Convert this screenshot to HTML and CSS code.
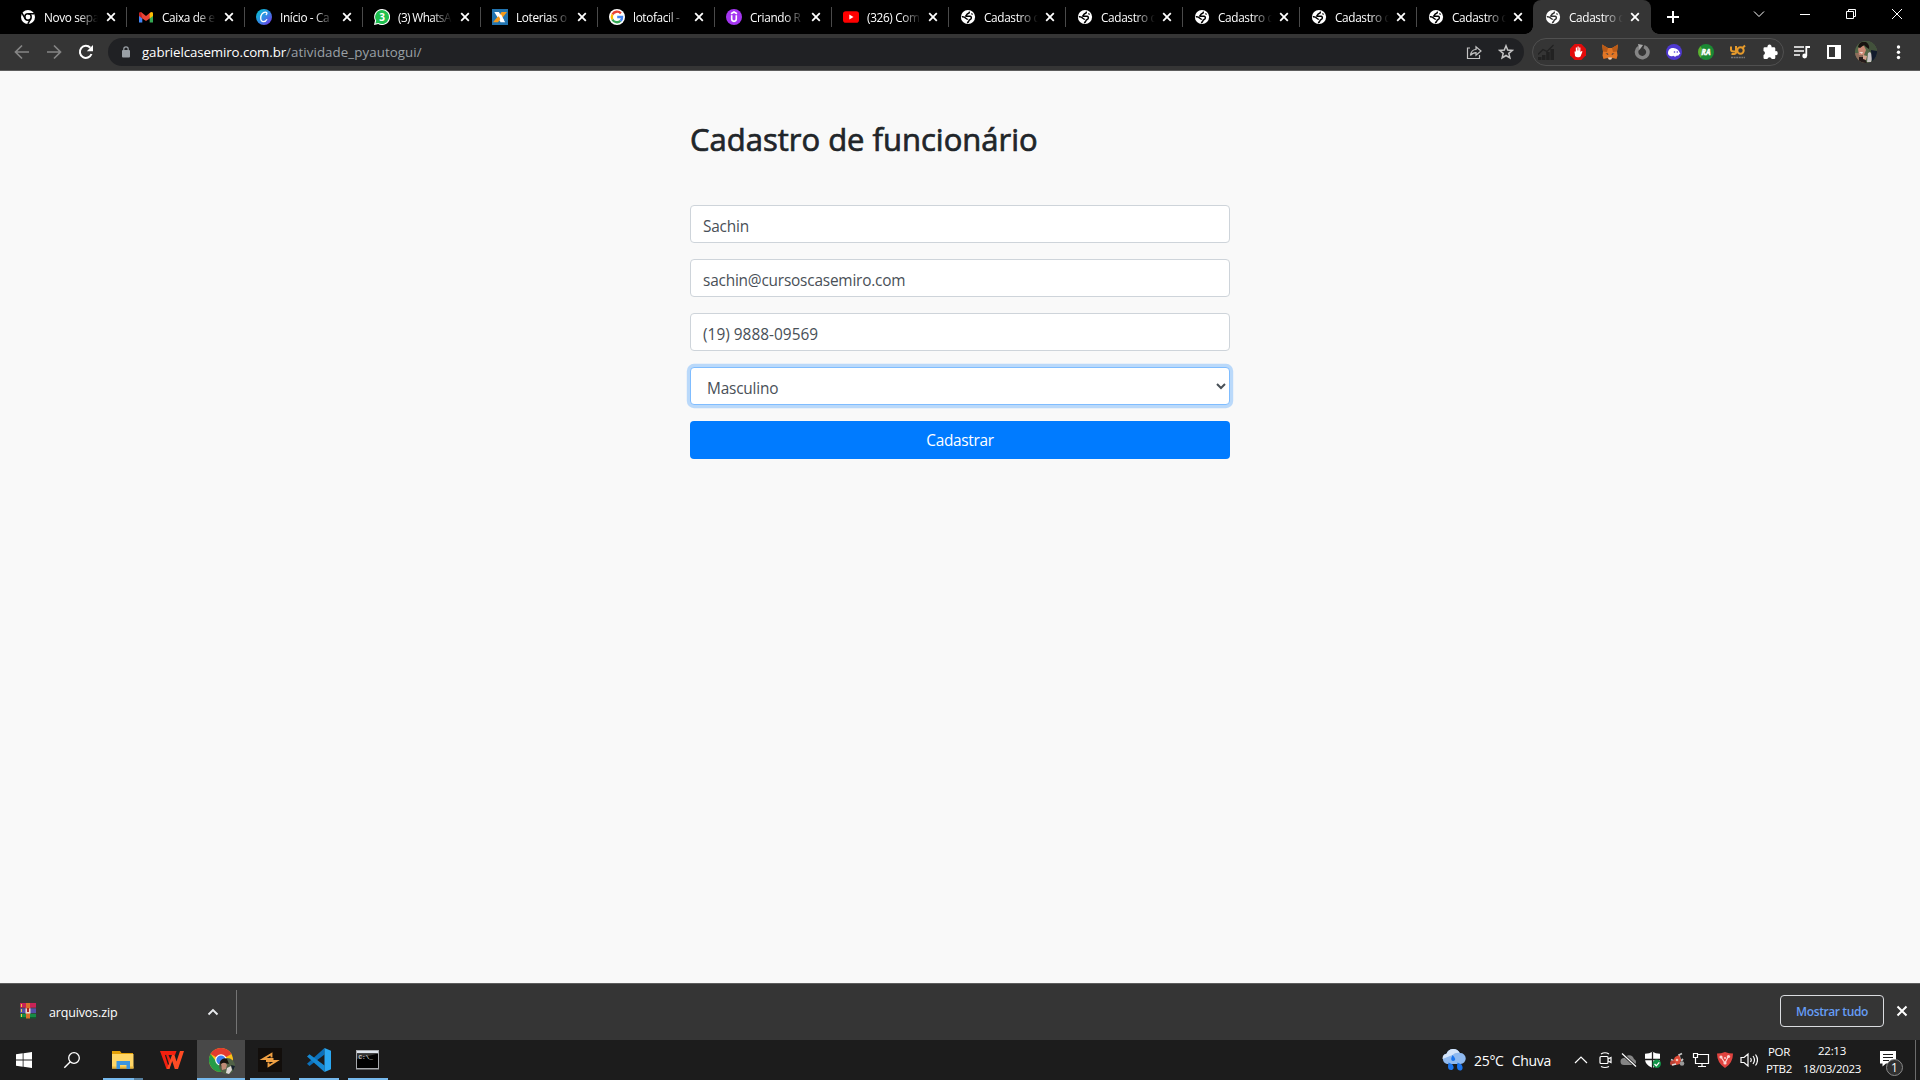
FILE: index.html
```
<!DOCTYPE html>
<html lang="pt-BR">
<head>
<meta charset="utf-8">
<title>Cadastro de funcionário</title>
<link rel="stylesheet" href="styles.css">
</head>
<body>
<svg class="defs" width="0" height="0">
  <symbol id="x" viewBox="0 0 16 16"><path d="M4.2 4.2l7.6 7.6M11.8 4.2l-7.6 7.6" stroke="currentColor" stroke-width="1.8" fill="none"/></symbol>
  <symbol id="globe" viewBox="0 0 16 16"><circle cx="8" cy="8" r="7.1" fill="#fff"/><path d="M9 2.600c.8 1.200-.2 1.900-1.400 2.200-1 .3-.6 1.600-2.200 2.400h4.800c1.300.2 1.500 1.700.6 2.800-.7.800-1.800.9-2 2-.2.900-.9 1.600-1.800 1.800" fill="none" stroke="currentColor" stroke-width="1.500"/><path d="M1.800 7.800c1.500-.2 3 .3 4 1.500.7.700 1.700.6 1.700 1.400" fill="none" stroke="currentColor" stroke-width="1.500"/><path d="M11.500 4.300l1 1.300" stroke="currentColor" stroke-width="1.200"/></symbol>
</svg>

<header class="tabs">
  <div class="tab wide"><svg class="fav" viewBox="0 0 16 16"><circle cx="8" cy="8" r="7" fill="#fff"/><circle cx="8" cy="8" r="3.2" fill="#fff" stroke="#000" stroke-width="1.5"/><path d="M8 4.8h6.4M5.2 9.6 2 4.2M10.8 9.6l-3 5.2" stroke="#000" stroke-width="1.5"/></svg><span class="title">Novo sepa</span><svg class="close"><use href="#x"/></svg></div>
  <div class="tab wide"><svg class="fav" viewBox="0 0 16 16"><path d="M1 4.5v9h3.3V7z" fill="#4285f4"/><path d="M15 4.5v9h-3.3V7z" fill="#34a853"/><path d="M1 4.2V7l3.3 2.4V4.2L2.7 3Q1 3 1 4.2z" fill="#c5221f"/><path d="M3 3.1 8 7l5-3.9-1.3 6.3L8 12 4.3 9.4z" fill="#ea4335"/><path d="M15 4.2V7l-3.3 2.4V4.2L13.3 3Q15 3 15 4.2z" fill="#fbbc04"/></svg><span class="title">Caixa de e</span><svg class="close"><use href="#x"/></svg></div>
  <div class="tab wide"><svg class="fav" viewBox="0 0 16 16"><defs><linearGradient id="cv" x2="1" y2="1"><stop stop-color="#00c4cc"/><stop offset=".5" stop-color="#2f8de4"/><stop offset="1" stop-color="#7d2ae8"/></linearGradient></defs><circle cx="8" cy="8" r="8" fill="url(#cv)"/><path d="M9.8 5.9c1.8-1.1 1.4-2.8-.3-2.8C6.6 3.1 4.700 6 4.700 9c0 2.3 1 3.7 2.7 3.7 1.600 0 2.800-1 3.600-2.500" fill="none" stroke="#fff" stroke-width="1.3"/></svg><span class="title">Início - Ca</span><svg class="close"><use href="#x"/></svg></div>
  <div class="tab wide"><svg class="fav" viewBox="0 0 16 16"><path d="M8 0a8 8 0 1 1-3.8 15L0 16l1-4.4A8 8 0 0 1 8 0z" fill="#fff"/><path d="M8 1a7 7 0 1 1-3.6 13L1.400 14.600l.8-2.900A7 7 0 0 1 8 1z" fill="#1fbf4f"/><text x="8" y="11.500" text-anchor="middle" font-size="10" font-weight="700" fill="#fff">3</text></svg><span class="title tight">(3) WhatsA</span><svg class="close"><use href="#x"/></svg></div>
  <div class="tab"><svg class="fav" viewBox="0 0 16 16"><path fill="#2274b0" d="M0 0h16v16H0z"/><path d="M2.300 3h4.500l6.400 10.200H8.600z" fill="#fff"/><path d="M9.500 3H15L10.800 8.300H6zM5.200 8.200h4.700L6 13.200H1z" fill="#f59a1b"/><path d="M6 5.500h3.200l3 6H9z" fill="#fff"/></svg><span class="title">Loterias o</span><svg class="close"><use href="#x"/></svg></div>
  <div class="tab"><svg class="fav" viewBox="0 0 16 16"><circle cx="8" cy="8" r="8" fill="#fff"/><g fill="none" stroke-width="2.300"><path d="M11.900 4.400A5.200 5.200 0 0 0 3.400 5.600" stroke="#ea4335"/><path d="M3.400 5.600a5.200 5.200 0 0 0 0 4.800" stroke="#fbbc04"/><path d="M3.400 10.400a5.200 5.200 0 0 0 8.100 1.500" stroke="#34a853"/><path d="M11.500 11.900A5 5 0 0 0 13.100 8H8.200" stroke="#4285f4"/></g></svg><span class="title">lotofacil -</span><svg class="close"><use href="#x"/></svg></div>
  <div class="tab"><svg class="fav" viewBox="0 0 16 16"><circle cx="8" cy="8" r="8" fill="#a435f0"/><path d="M5 4.700 8 3l3 1.700M5.700 6.300v3.800c0 3 4.600 3 4.600 0V6.300" stroke="#fff" stroke-width="1.600" fill="none"/></svg><span class="title">Criando R</span><svg class="close"><use href="#x"/></svg></div>
  <div class="tab"><svg class="fav" viewBox="0 0 16 16"><rect y="2.300" width="16" height="11.400" rx="2.800" fill="#f00"/><path d="M6.300 5.600v4.800L10.500 8z" fill="#fff"/></svg><span class="title">(326) Com</span><svg class="close"><use href="#x"/></svg></div>
  <div class="tab"><svg class="fav"><use href="#globe"/></svg><span class="title">Cadastro d</span><svg class="close"><use href="#x"/></svg></div>
  <div class="tab"><svg class="fav"><use href="#globe"/></svg><span class="title">Cadastro d</span><svg class="close"><use href="#x"/></svg></div>
  <div class="tab"><svg class="fav"><use href="#globe"/></svg><span class="title">Cadastro d</span><svg class="close"><use href="#x"/></svg></div>
  <div class="tab"><svg class="fav"><use href="#globe"/></svg><span class="title">Cadastro d</span><svg class="close"><use href="#x"/></svg></div>
  <div class="tab last"><svg class="fav"><use href="#globe"/></svg><span class="title">Cadastro d</span><svg class="close"><use href="#x"/></svg></div>
  <div class="tab active"><svg class="fav"><use href="#globe"/></svg><span class="title">Cadastro d</span><svg class="close"><use href="#x"/></svg></div>
  <svg class="newtab" viewBox="0 0 16 16"><path d="M8 2v12M2 8h12" stroke="#fff" stroke-width="2"/></svg>
  <div class="winctl">
    <svg viewBox="0 0 12 12"><path d="M1 3.500l5 5 5-5"/></svg>
    <svg viewBox="0 0 12 12"><path d="M1 6.500h10"/></svg>
    <svg viewBox="0 0 12 12"><path d="M1.500 3.500h7v7h-7zM3.500 3.500v-2h7v7h-2"/></svg>
    <svg viewBox="0 0 12 12"><path d="M1 1l10 10M11 1L1 11"/></svg>
  </div>
</header>

<nav class="toolbar">
  <div class="navbtns">
    <svg viewBox="0 0 16 16" class="dim"><path d="M15 8H2M8 1.500 1.500 8 8 14.500"/></svg>
    <svg viewBox="0 0 16 16" class="dim"><path d="M1 8h13M8 1.500 14.500 8 8 14.500"/></svg>
    <svg viewBox="0 0 16 16"><path d="M13.500 10A6 6 0 1 1 12.300 3.800" stroke-width="2"/><path d="M15 1v6.200H8.800z" fill="#fff" stroke="none"/></svg>
  </div>
  <div class="address">
    <svg class="lock" viewBox="0 0 10 12"><rect x="1" y="4" width="8" height="7.500" rx="1" fill="#9aa0a6"/><path d="M2.800 4.500V3a2.200 2.200 0 0 1 4.400 0v1.500" stroke="#9aa0a6" stroke-width="1.200" fill="none"/></svg>
    <span class="url">gabrielcasemiro.com.br<span class="path">/atividade_pyautogui/</span></span>
    <svg class="addr-icon" viewBox="0 0 16 16"><path d="M4 4H1.500v10.500h12V11M4.500 11.500c.5-4 2.500-6 5.500-6V2.700L15 7l-5 4.200V8.600c-2.300 0-4 .8-5.500 2.900z"/></svg>
    <svg class="addr-icon" viewBox="0 0 16 16"><path d="M8 1.800 9.700 6l4.700.4-3.600 3 1.100 4.500L8 11.500l-3.900 2.400 1.100-4.500-3.600-3L6.300 6z" stroke-width="1.500"/></svg>
  </div>
  <div class="exts">
    <svg viewBox="0 0 16 16"><path d="M0 16v-3h3.500v3zM4 16v-5h3.500v5zM8.200 16V8h3.500v8zM12.400 16V5H16v11z" fill="#222"/><path d="M0 10.500l5-5 4 2 6.500-6.500" stroke="#222" stroke-width="1.300" fill="none"/></svg>
    <svg viewBox="0 0 16 16"><path d="M4.700 0h6.600L16 4.700v6.600L11.300 16H4.700L0 11.300V4.700z" fill="#e20b0b"/><path d="M4.500 7.500h1.300V3.600H7v3h.5V2.500h1.200v4h.5v-3h1.200v4.600l1.300-1.200.8.700-2 4.800q-3 2-5.400-.2z" fill="#fff"/></svg>
    <svg viewBox="0 0 16 16"><path d="M0 .5 6 4h4l6-3.500-1 7 .5 4-1 3.500-4-1L9 15.500H7L5.500 14l-4 1-1-3.500.5-4z" fill="#e27625"/><path d="M0 .5 6 4l-1 4-4-.5zM16 .5 10 4l1 4 4-.5z" fill="#b95a17"/><path d="m3.500 9.500 2.500 0 .3 1.500zM12.500 9.500H10l-.3 1.500z" fill="#233447"/><path d="M6 13.500h4L9.200 15.500H6.800z" fill="#d9d0c5"/></svg>
    <svg viewBox="0 0 16 16"><path d="M5.200 3.200A5.700 5.700 0 1 0 10 2.600" fill="none" stroke="#858585" stroke-width="3.600"/><path d="M4 0l5 1-3.500 5z" fill="#aaa"/></svg>
    <svg viewBox="0 0 16 16"><circle cx="8" cy="8" r="8" fill="#4e38cf"/><path d="M2 9.500C2 5 5 3.600 8.400 4.200c3.500.4 4.800 3 6 5.600-1.500-.3-1.300 2.500-3.400 1.800-1.500 1.800-3 1-3.800.2C5 13 2.600 12 2 9.500z" fill="#fff"/><circle cx="8.500" cy="8" r=".8" fill="#4e38cf"/><circle cx="11.300" cy="8" r=".8" fill="#4e38cf"/></svg>
    <svg viewBox="0 0 16 16"><circle cx="8" cy="8" r="8" fill="#1b8a34"/><path d="M2.500 2.300A8 8 0 0 0 2.500 13.700L6 8z" fill="#63b02f"/><text x="8" y="11.200" text-anchor="middle" font-size="8.500" font-weight="700" font-style="italic" fill="#fff" stroke="#fff" stroke-width=".5" textLength="9" lengthAdjust="spacingAndGlyphs">RA</text></svg>
    <svg viewBox="0 0 16 16"><path d="M1 2.500v3q0 2 2.500 2H6m0-5.500v6.500q0 2-4.500 1.500M15 1.500l-3 3" stroke="#e59a2c" stroke-width="2" fill="none"/><circle cx="10.500" cy="6.500" r="3.200" stroke="#e59a2c" stroke-width="2" fill="none"/><path d="M1 13.500h14" stroke="#777" stroke-width="1.500" stroke-dasharray="2 .6"/></svg>
    <svg viewBox="0 0 16 16"><path d="M1.500 4.500q0-1.200 1.200-1.200H5.500a2.100 2.100 0 1 1 4 0h2.600q1.200 0 1.200 1.200v2.700a2 2 0 1 1 0 3.900v2.700q0 1.200-1.200 1.200H9.700a2.200 2.200 0 0 0-4.300 0H2.700q-1.200 0-1.200-1.200v-2.700a2.100 2.100 0 0 0 0-4z" fill="#fff"/></svg>
  </div>
  <div class="menu">
    <svg viewBox="0 0 16 16"><path d="M0 3h10M0 7h10M0 11h6" stroke="#fff" stroke-width="1.700"/><path d="M12.300 12V3h3.700" stroke="#fff" stroke-width="1.800" fill="none"/><circle cx="10.700" cy="12" r="2.400" fill="#fff"/></svg>
    <svg viewBox="0 0 16 16"><path d="M1 1h14v14H1zM3 3v10h6V3z" fill="#fff" fill-rule="evenodd"/></svg>
    <svg class="avatar" viewBox="0 0 22 22"><defs><clipPath id="ac"><circle cx="11" cy="11" r="11"/></clipPath></defs><g clip-path="url(#ac)"><path fill="#536747" d="M0 0h22v22H0z"/><path d="M10 0h12v12l-7-1z" fill="#42513b"/><path d="M0 12h7l3 10H0z" fill="#8e6d5c"/><path d="M3 8q2-4 6-3l2 4-2 5-5 0z" fill="#c98873"/><path d="M3 6q1-6 8-5 4 3 3 7l-3-2-2-2-4 3z" fill="#17120f"/><path d="m4 11 4 0-1 2z" fill="#f0dcd3"/><path d="m13 12 2-1 3 4-2 6H12z" fill="#c9c4c4"/><path d="m16 9 6 1v12h-5z" fill="#111a2c"/><path d="m4 16 5 0 3 6H4z" fill="#251b1b"/><path d="m8 14 4 1-1 4-3-1z" fill="#d6a48e"/></g></svg>
    <svg viewBox="0 0 16 16" fill="#fff"><circle cx="8.500" cy="3" r="1.700"/><circle cx="8.500" cy="8.300" r="1.700"/><circle cx="8.500" cy="13.500" r="1.700"/></svg>
  </div>
</nav>

<main class="page">
  <form class="form">
    <h1>Cadastro de funcionário</h1>
    <input class="field" type="text" value="Sachin">
    <input class="field" type="text" value="sachin@cursoscasemiro.com">
    <input class="field phone" type="text" value="(19) 9888-09569">
    <select class="field focused"><option>Masculino</option></select>
    <button class="submit" type="button">Cadastrar</button>
  </form>
</main>

<section class="downloads">
  <div class="file">
    <svg class="rar" viewBox="0 0 16 16"><path fill="#c92357" d="M0 0h16v5H0z"/><path fill="#5550a8" d="M0 5h16v5.500H0z"/><path fill="#168c45" d="M0 10.500h16V15H0z"/><path fill="#0e5c2d" d="M0 14h16v1.500H0z"/><path fill="#d9702b" d="M6 0h4v15.500H6z"/><path fill="#e8d8ce" d="M5.500 5.500h5v5h-5z"/><path fill="#b31f1f" d="M7 5h2v4H7z"/><path d="M1.500 1v3M1.500 6v3M1.500 11v3" stroke="#f1c644"/><path d="M0 5h5M11 5h5M0 10.500h5M11 10.500h5" stroke="#343" stroke-width=".7"/></svg>
    <span>arquivos.zip</span>
    <svg class="caret" viewBox="0 0 12 12"><path d="M1.500 8.500 6 4l4.500 4.500" stroke="#e8eaed" stroke-width="1.900" fill="none"/></svg>
  </div>
  <button class="showall" type="button">Mostrar tudo</button>
  <svg class="dclose" viewBox="0 0 12 12"><path d="M1.500 1.500l9 9M10.500 1.500l-9 9" stroke="#fff" stroke-width="2"/></svg>
</section>

<footer class="taskbar">
  <div class="sys"><svg width="16" height="16" viewBox="0 0 16 16" fill="#fff"><path d="M0 2.300 6.700 1.300v6.300H0zM7.500 1.200 16 0v7.600H7.500zM0 8.400h6.700v6.300L0 13.700zM7.500 8.400H16V16l-8.500-1.200z"/></svg></div>
  <div class="sys"><svg width="18" height="18" viewBox="0 0 18 18"><circle cx="11" cy="7" r="5.300" fill="none" stroke="#fff" stroke-width="1.300"/><path d="M7.300 10.800 1.300 16.800" stroke="#fff" stroke-width="1.400"/></svg></div>
  <div class="apps">
    <div class="app run multi"><svg width="22" height="20" viewBox="0 0 22 20"><path d="M0 1h8l1.500 2H21v5H0z" fill="#e3a008"/><path d="M0 4h21.500v14.500H0z" fill="#ffd667"/><path d="M0 16.500h21.500v2H0z" fill="#e8b63d"/><path d="M4.500 11h13.500v8h-3.500v-4H8v4H4.500z" fill="#3b95e0"/></svg></div>
    <div class="app"><svg width="24" height="20" viewBox="0 0 24 20"><path d="M0 1h16.500l-1.500 4H8.500l3 7-2.500 7H6.500z" fill="#f3200f"/><path d="M20 1h4l-6 18h-3.200l-2.600-8L9.500 19H6.800L12 5h2.500l2 6.500z" fill="#ff4b24"/><path d="m5.500 5 3 9.500" stroke="#1c1c1c" stroke-width="1.200"/></svg></div>
    <div class="app run current"><svg width="26" height="26" viewBox="0 0 26 26"><circle cx="12" cy="12" r="12" fill="#fbc116"/><path d="M12 12 1.600 6A12 12 0 0 1 22.400 6z" fill="#e33b2e"/><path d="M1.600 6A12 12 0 0 0 12 24l5-9-8 1z" fill="#269c48"/><circle cx="12" cy="12" r="5.800" fill="#fff"/><circle cx="12" cy="12" r="4.600" fill="#3b7ded"/><circle cx="18" cy="18" r="8" fill="#516247"/><path d="M11 14q2-5 7-3l2 5-4-1-4 4z" fill="#18130f"/><path d="M12 16q4-3 6 1l-1 4-4 1z" fill="#c08b76"/><path d="m18 20 4-2 1 4-3 4-3-1z" fill="#ded7d6"/><path d="m22 17 4 1-2 5z" fill="#17202e"/></svg></div>
    <div class="app run"><svg width="24" height="24" viewBox="0 0 24 24"><path fill="#120e0b" d="M0 0h24v24H0z"/><path d="M13.500 9.500V6L5 11l10.500 0M8 13h10.500L10.500 18V14.500" stroke="#efa043" stroke-width="1.900" fill="none"/></svg></div>
    <div class="app run"><svg width="24" height="24" viewBox="0 0 24 24"><path d="M17.500 0v6.500L2.500 18 0 15.800z" fill="#0c70ba"/><path d="M0 8.500 2.500 6.300 17.500 17.500V24z" fill="#1689d3"/><path d="M17.500 0 24 2.800v18.500L17.500 24z" fill="#2ba8f2"/></svg></div>
    <div class="app run"><svg width="24" height="20" viewBox="0 0 24 20"><path fill="#a7a9ad" d="M0 0h23v19.500H0z"/><path fill="#dfe5ee" d="M1 1h21v2H1z"/><path fill="#000" d="M1 3.500h21v14.500H1z"/><path d="M1 9V3.500h21z" fill="#333"/><text x="2.500" y="9" font-size="6" font-family="Liberation Mono" fill="#fff">C:\_</text></svg></div>
  </div>
  <div class="weather"><svg width="26" height="24" viewBox="0 0 26 24"><path d="M6 16A5.500 5.500 0 0 1 5.500 5.500 7.500 7.500 0 0 1 19 5 5.500 5.500 0 0 1 19.500 16z" fill="#8fb9ef"/><path d="M5.500 6a7 7 0 0 1 13-1q-4-1-7 2l-10 4q0-5 4-5z" fill="#d5e5fa"/><path d="M11.500 7q5 5 1 6-4 0-1-6zM7.500 14.500l4 2q2.500 4-.5 5.500-4 .5-4-3.500zM16.500 14.500l4 2q2.500 4-.5 6-4 .5-4-4z" fill="#1b75ee"/></svg><span>25°C</span><span>Chuva</span></div>
  <div class="tray">
    <svg viewBox="0 0 18 18"><path d="M3 12l6-6 6 6" class="ln"/></svg>
    <svg viewBox="0 0 18 18"><rect x="4" y="5.500" width="8" height="7" rx="1" class="ln"/><path d="m12 8 3-1.500v5L12 10M5 3q4-2.500 8 0M5 15.500q4 2 8 0" class="ln"/></svg>
    <svg viewBox="0 0 18 18"><path d="M4 14a3.500 3.500 0 0 1 0-7 5.500 5.500 0 0 1 10 1 3.200 3.200 0 0 1 0 6z" fill="#858585"/><path d="M2 2.500l14 13" stroke="#1c1c1c" stroke-width="3"/><path d="M2 2.500l14 13" class="ln"/></svg>
    <svg viewBox="0 0 18 18"><path d="M8.500.8q3 2 7.500 2V8q0 6-7.500 9Q1 14 1 8V2.800q4.500 0 7.500-2z" fill="#fff"/><path d="M8.500 1v16M1 8.500h15" stroke="#1c1c1c" stroke-width="1.300"/><circle cx="12.800" cy="12.800" r="4.200" fill="#119347"/><path d="m10.500 13 1.800 1.800 3-3.500" stroke="#fff" stroke-width="1.300" fill="none"/></svg>
    <svg viewBox="0 0 18 18"><path d="M3 8.500 8 11M12 9l-1-5 3-1.500M13 10l2-2" stroke="#c4c4c4" stroke-width="1.800" fill="none"/><path d="m7 6 4-2 2 5-1 4-4 1-3-4z" fill="#df4b38"/><circle cx="4.500" cy="12" r="2.500" fill="#b94034"/><path d="m4 14 4-1" stroke="#ddd" stroke-width="1.500"/><circle cx="14" cy="12.500" r="2.300" fill="#999"/><circle cx="9" cy="9" r="1.300" fill="#f6c8b8"/></svg>
    <svg viewBox="0 0 18 18"><path d="M5.500 3.500h11v9H3.500V7M10 12.500v3M6 15.500h8M1.500 2.500h4v4h-4zM3.500 6.500v4" class="ln"/></svg>
    <svg viewBox="0 0 18 18"><path d="M1 2.500q4 0 8-1.500 4 1.500 8 1.500Q17 12 9 17 1 12 1 2.500z" fill="#e0433f"/><path d="m5 6 4 6 3-6" stroke="#fbd5d3" stroke-width="1.300" fill="none"/><g fill="#fbd5d3"><circle cx="5" cy="6" r="1.600"/><circle cx="9" cy="12" r="1.600"/><circle cx="12.500" cy="5.500" r="1.600"/><circle cx="9" cy="7" r="1"/></g></svg>
    <svg viewBox="0 0 18 18"><path d="M1 6.500h3l4-3.500v12l-4-3.500H1zM10.500 7q1.500 2 0 4M13 5q3 4 0 8M15.500 3.500q4 5.500 0 11" class="ln"/></svg>
  </div>
  <div class="lang"><span>POR</span><span>PTB2</span></div>
  <div class="clock"><span>22:13</span><span>18/03/2023</span></div>
  <div class="notif"><svg width="16" height="16" viewBox="0 0 16 16"><path d="M0 0h16v12.500H6L2.500 15.500v-3H0z" fill="#fff"/><path d="M3 3.500h10M3 6.500h10M3 9.500h6" stroke="#1c1c1c" stroke-width="1.200"/></svg><span class="badge">1</span></div>
  <div class="desktop"></div>
</footer>
</body>
</html>
```
FILE: styles.css
```
* { box-sizing: border-box; }
body {
  margin: 0; width: 1920px; height: 1080px; overflow: hidden;
  display: flex; flex-direction: column;
  background: #f9f9f9; font-family: "Open Sans", "Noto Sans", sans-serif;
}
svg { flex: none; display: block; }
.defs { position: absolute; }

.tabs { height: 34px; flex: none; background: #000; display: flex; align-items: stretch; padding-left: 9px; color: #fff; }
.tab { width: 117px; flex: none; display: flex; align-items: center; padding-left: 11px; background: linear-gradient(#4a4a4a, #4a4a4a) right 7px / 1px 20px no-repeat; }
.tab.wide { width: 118px; }
.tab.last { background: none; width: 116px; }
.tab.active { width: 118px; padding-left: 12px; background: #353535; border-radius: 8px 8px 0 0; position: relative; }
.tab.active::before, .tab.active::after { content: ""; position: absolute; bottom: 0; width: 8px; height: 8px; }
.tab.active::before { left: -8px; background: radial-gradient(circle at 0 0, transparent 7.5px, #353535 8px); }
.tab.active::after { right: -8px; background: radial-gradient(circle at 100% 0, transparent 7.5px, #353535 8px); }
.fav { width: 16px; height: 16px; color: #000; }
.active .fav { color: #353535; }
.title { width: 55px; margin-left: 8px; white-space: nowrap; font-size: 11.8px; letter-spacing: -.35px; line-height: 16px; -webkit-mask-image: linear-gradient(90deg, #000 62%, transparent 98%); mask-image: linear-gradient(90deg, #000 62%, transparent 98%); }
.title.tight { letter-spacing: -.6px; }
.close { width: 16px; height: 16px; margin-left: 3px; color: #fff; }
.wide .close { margin-left: 4px; }
.newtab { width: 16px; height: 16px; margin: 9px 0 0 14px; }
.winctl { display: flex; margin-left: auto; padding: 8px 17px 0 0; gap: 34px; }
.winctl svg { width: 12px; height: 12px; fill: none; stroke: #fff; stroke-width: 1; }

.toolbar { height: 37px; flex: none; background: #353535; border-bottom: 1px solid #5d5d5d; display: flex; align-items: center; }
.navbtns { width: 108px; display: flex; gap: 16px; padding-left: 14px; }
.navbtns svg { width: 16px; height: 16px; fill: none; stroke: #fff; stroke-width: 1.7; }
.navbtns .dim { stroke: #858585; }
.address { width: 1416px; height: 28px; border-radius: 14px; background: #202124; display: flex; align-items: center; padding: 0 10px 0 13px; }
.lock { width: 10px; height: 12px; }
.url { flex: 1; margin-left: 11px; font-size: 13.3px; letter-spacing: -.1px; line-height: 20px; color: #fff; }
.path { color: #9aa0a6; letter-spacing: .08px; }
.addr-icon { width: 16px; height: 16px; margin-left: 16px; fill: none; stroke: #c4c4c4; stroke-width: 1.2; }
.exts { width: 252px; height: 28px; margin-left: 8px; border: 1px solid #505050; border-radius: 14px; display: flex; align-items: center; gap: 16px; padding-left: 5px; }
.exts svg { width: 16px; height: 16px; }
.menu { display: flex; align-items: center; gap: 16px; margin-left: 10px; }
.menu svg { width: 16px; height: 16px; }
.menu .avatar { width: 22px; height: 22px; margin: 0 -3px; }

.page { flex: 1; display: flex; justify-content: center; padding-top: 49px; }
.form { width: 540px; display: flex; flex-direction: column; }
h1 { margin: 0 0 47px; font-size: 31px; line-height: 38px; font-weight: 400; -webkit-text-stroke: .7px #212529; color: #212529; white-space: nowrap; }
.field { width: 100%; height: 38px; margin: 0 0 16px; padding: 8px 12px 4px; border: 1px solid #ced4da; border-radius: 4px; background: #fff; color: #495057; font-family: inherit; font-size: 15.4px; letter-spacing: -.2px; line-height: 24px; outline: none; }
.phone { letter-spacing: .02px; }
.focused { border-color: #80bdff; box-shadow: 0 0 0 3.2px rgba(0, 123, 255, .25); }
.submit { height: 38px; border: 0; border-radius: 4px; background: #007bff; color: #fff; font-family: inherit; font-size: 15.4px; letter-spacing: -.3px; line-height: 24px; padding: 8px 12px 6px; }

.downloads { height: 57px; flex: none; background: #353535; border-top: 1px solid #5d5d5d; display: flex; align-items: center; color: #fff; }
.file { width: 237px; height: 44px; border-right: 1px solid #747474; display: flex; align-items: center; padding-left: 20px; font-size: 12.5px; }
.file span { width: 152px; margin-left: 13px; padding-top: 1px; letter-spacing: -.15px; }
.rar { width: 16px; height: 16px; margin-top: -3px; }
.caret { width: 12px; height: 12px; margin-left: 6px; }
.showall { width: 104px; height: 32px; margin: -2px 0 0 auto; border: 1px solid #dadce0; border-radius: 4px; background: transparent; color: #669df6; font-family: inherit; font-size: 12px; font-weight: 600; letter-spacing: -.4px; padding: 0; white-space: nowrap; }
.dclose { width: 12px; height: 12px; margin: -2px 12px 0; }

.taskbar { height: 40px; flex: none; background: #1c1c1c; display: flex; align-items: stretch; color: #fff; font-size: 11.5px; }
.sys { width: 48px; display: flex; align-items: center; justify-content: center; }
.apps { display: flex; gap: 1px; margin-left: 3px; }
.app { width: 48px; display: flex; align-items: center; justify-content: center; }
.app.run { background: linear-gradient(#76b9ed, #76b9ed) center bottom / 40px 2px no-repeat; }
.app.multi { background: linear-gradient(90deg, #76b9ed 31px, #557f9f 31px) center bottom / 40px 2px no-repeat; }
.app.current { padding: 2px 0 0 2px; background: linear-gradient(#76b9ed, #76b9ed) center bottom / 48px 2px no-repeat #484848; }
.weather { margin-left: auto; width: 131px; display: flex; align-items: center; font-size: 14px; letter-spacing: -.3px; }
.weather span { margin-left: 7px; }
.weather span + span { margin-left: 8px; }
.tray { width: 191px; display: flex; align-items: center; gap: 6px; }
.tray svg { width: 18px; height: 18px; }
.ln { fill: none; stroke: #fff; stroke-width: 1.2; }
.lang, .clock { display: flex; flex-direction: column; justify-content: center; align-items: center; line-height: 17px; letter-spacing: -.3px; white-space: nowrap; }
.lang { width: 32px; }
.clock { width: 74px; line-height: 18px; padding-bottom: 1px; }
.notif { width: 46px; display: flex; align-items: center; padding-left: 11px; position: relative; }
.notif svg { margin-top: -2px; }
.badge { position: absolute; left: 17px; top: 19px; width: 17px; height: 17px; border: 1px solid #8a8a8a; border-radius: 50%; background: #303030; text-align: center; font-size: 12px; line-height: 15px; }
.desktop { width: 5px; border-left: 1px solid #6c6c6c; }
```
